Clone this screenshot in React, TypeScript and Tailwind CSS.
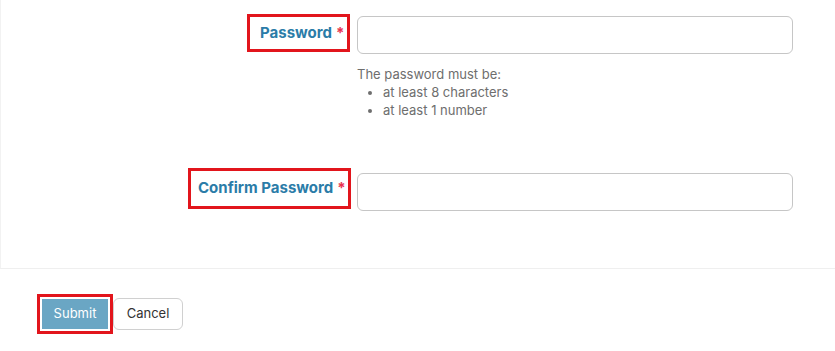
export default function App() {
  return (
    <div className="w-[835px] h-[351px] bg-white overflow-hidden" style={{ fontFamily: 'Inter, "Noto Sans", sans-serif' }}>
      {/* form fields */}
      <div className="h-[269px] border-l border-[#f2f2f2] border-b border-b-[#efefef] pt-[14px]">
        <div className="flex items-start">
          <div className="w-[349px] flex justify-end">
            <label className="h-[38px] w-[103px] border-[3px] border-[#e2151c] flex items-center pl-[10px] text-[15px] font-bold text-[#2b7ca8]">
              Password <span className="ml-1 text-[#e8334f]">*</span>
            </label>
          </div>
          <div className="ml-[7px]">
            <input type="password" className="mt-[2px] block w-[436px] h-[38px] rounded-[6px] border border-[#c6c6c6] bg-white" />
            <div className="mt-[11px] text-[13px] leading-[18px] text-[#6e6e6e]">
              <p>The password must be:</p>
              <ul className="list-disc pl-[26px]">
                <li>at least 8 characters</li>
                <li>at least 1 number</li>
              </ul>
            </div>
          </div>
        </div>

        <div className="flex items-start mt-[49px]">
          <div className="w-[350px] flex justify-end">
            <label className="h-[41px] w-[163px] border-[3px] border-[#e2151c] flex items-center pl-[7px] text-[15px] font-bold text-[#2b7ca8]">
              Confirm Password <span className="ml-1 text-[#e8334f]">*</span>
            </label>
          </div>
          <input type="password" className="ml-[6px] mt-[5px] block w-[436px] h-[38px] rounded-[6px] border border-[#c6c6c6] bg-white" />
        </div>
      </div>

      {/* actions */}
      <div className="flex items-center pl-[37px] pt-[25px]">
        <div className="border-[3px] border-[#e2151c] p-[2px]">
          <button className="h-[30px] w-[66px] bg-[#6aa6c4] text-white text-[13px]">Submit</button>
        </div>
        <button className="h-[32px] w-[70px] rounded-[6px] border border-[#d0d0d0] bg-white text-[13px] text-[#333]">Cancel</button>
      </div>
    </div>
  )
}
